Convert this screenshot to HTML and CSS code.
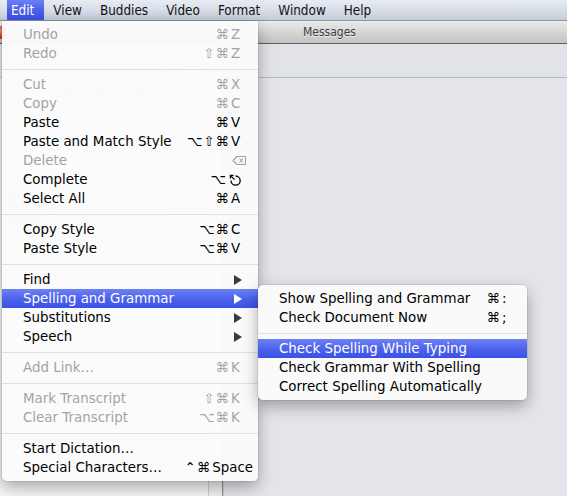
FILE: index.html
```html
<!DOCTYPE html>
<html lang="en">
<head>
<meta charset="utf-8">
<title>Messages — Edit menu</title>
<link rel="stylesheet" href="styles.css">
</head>
<body>
  <header class="menubar">
    <span class="mb-item mb-first active">Edit</span>
    <span class="mb-item">View</span>
    <span class="mb-item">Buddies</span>
    <span class="mb-item">Video</span>
    <span class="mb-item">Format</span>
    <span class="mb-item">Window</span>
    <span class="mb-item">Help</span>
  </header>

  <div class="window">
    <div class="titlebar">
      <div class="lights"><span class="light close"></span></div>
      <span class="title">Messages</span>
      <div></div>
    </div>
    <div class="panes">
      <aside class="sidebar">
        <div class="side-main">
          <div class="side-head">
            <div class="search"><span class="glass"></span></div>
            <span class="compose"></span>
          </div>
          <div class="conv new">New Message</div>
          <div class="conv person">
            <span class="avatar"></span>
            <div class="conv-lines">
              <span class="line l1"></span>
              <span class="line l2"></span>
              <span class="line l3"></span>
            </div>
          </div>
        </div>
        <div class="side-strip"></div>
      </aside>
      <main class="content">
        <div class="content-bar"></div>
      </main>
    </div>
  </div>

  <div class="menu edit-menu">
    <div class="item disabled"><span class="label">Undo</span><span class="sc"><span class="mods">⌘</span><span class="key">Z</span></span></div>
    <div class="item disabled"><span class="label">Redo</span><span class="sc"><span class="mods">⇧⌘</span><span class="key">Z</span></span></div>
    <div class="sep"></div>
    <div class="item disabled"><span class="label">Cut</span><span class="sc"><span class="mods">⌘</span><span class="key">X</span></span></div>
    <div class="item disabled"><span class="label">Copy</span><span class="sc"><span class="mods">⌘</span><span class="key">C</span></span></div>
    <div class="item"><span class="label">Paste</span><span class="sc"><span class="mods">⌘</span><span class="key">V</span></span></div>
    <div class="item"><span class="label">Paste and Match Style</span><span class="sc"><span class="mods">⌥⇧⌘</span><span class="key">V</span></span></div>
    <div class="item disabled"><span class="label">Delete</span><span class="sc"><span class="key wide">
      <svg class="glyph-del" viewBox="0 0 15 11" width="15" height="11"><path d="M5 1.5 H13.5 V9.5 H5 L1 5.5 Z" fill="none" stroke="currentColor" stroke-width="1.1" stroke-linejoin="round"/><path d="M7.5 3.5 L11 7.5 M11 3.5 L7.5 7.5" stroke="currentColor" stroke-width="1.1" fill="none"/></svg>
    </span></span></div>
    <div class="item"><span class="label">Complete</span><span class="sc"><span class="mods">⌥</span><span class="key">
      <svg class="glyph-esc" viewBox="0 0 12 12" width="12" height="12"><path d="M6.6 2 A4.6 4.6 0 1 1 2 6.6" fill="none" stroke="currentColor" stroke-width="1.3"/><path d="M5.6 5.6 L1.6 1.6 M1.4 4.6 V1.4 H4.6" fill="none" stroke="currentColor" stroke-width="1.3"/></svg>
    </span></span></div>
    <div class="item"><span class="label">Select All</span><span class="sc"><span class="mods">⌘</span><span class="key">A</span></span></div>
    <div class="sep"></div>
    <div class="item"><span class="label">Copy Style</span><span class="sc"><span class="mods">⌥⌘</span><span class="key">C</span></span></div>
    <div class="item"><span class="label">Paste Style</span><span class="sc"><span class="mods">⌥⌘</span><span class="key">V</span></span></div>
    <div class="sep"></div>
    <div class="item"><span class="label">Find</span><span class="arrow"></span></div>
    <div class="item hl"><span class="label">Spelling and Grammar</span><span class="arrow"></span></div>
    <div class="item"><span class="label">Substitutions</span><span class="arrow"></span></div>
    <div class="item"><span class="label">Speech</span><span class="arrow"></span></div>
    <div class="sep"></div>
    <div class="item disabled"><span class="label">Add Link…</span><span class="sc"><span class="mods">⌘</span><span class="key">K</span></span></div>
    <div class="sep"></div>
    <div class="item disabled"><span class="label">Mark Transcript</span><span class="sc"><span class="mods">⇧⌘</span><span class="key">K</span></span></div>
    <div class="item disabled"><span class="label">Clear Transcript</span><span class="sc"><span class="mods">⌥⌘</span><span class="key">K</span></span></div>
    <div class="sep"></div>
    <div class="item"><span class="label">Start Dictation…</span></div>
    <div class="item"><span class="label">Special Characters…</span><span class="sc sc-space"><span class="mods">⌃⌘</span><span class="key">Space</span></span></div>
  </div>

  <div class="menu submenu">
    <div class="item"><span class="label">Show Spelling and Grammar</span><span class="sc"><span class="mods">⌘</span><span class="key">:</span></span></div>
    <div class="item"><span class="label">Check Document Now</span><span class="sc"><span class="mods">⌘</span><span class="key">;</span></span></div>
    <div class="sep"></div>
    <div class="item hl"><span class="label">Check Spelling While Typing</span></div>
    <div class="item"><span class="label">Check Grammar With Spelling</span></div>
    <div class="item"><span class="label">Correct Spelling Automatically</span></div>
  </div>
</body>
</html>
```

FILE: styles.css
```css
* { box-sizing: border-box; }

html, body { margin: 0; padding: 0; }

body {
  width: 567px;
  height: 496px;
  overflow: hidden;
  position: relative;
  background: #e3e5eb;
  font-family: "DejaVu Sans", "Noto Sans", sans-serif;
}

/* ---------- menu bar ---------- */
.menubar {
  height: 21px;
  display: flex;
  align-items: stretch;
  padding-left: 7px;
  background: linear-gradient(to bottom, #e8ecf2 0%, #d6dce6 55%, #c4ccd9 100%);
  border-bottom: 1px solid #8e97a5;
  font-family: "DejaVu Sans Condensed", "DejaVu Sans", sans-serif;
  font-stretch: condensed;
  font-size: 13.4px;
  color: #121212;
}

.mb-item {
  display: flex;
  align-items: center;
  padding: 0 9px;
  white-space: nowrap;
}

.mb-item.mb-first { padding-left: 4px; padding-right: 10px; }

.mb-item.active {
  color: #fff;
  background: linear-gradient(to bottom, #6c80f5 0%, #4a60ec 50%, #3a50e6 100%);
}

/* ---------- Messages window ---------- */
.window {
  width: 659px;
  height: 475px;
  display: flex;
  flex-direction: column;
}

.titlebar {
  height: 23px;
  display: grid;
  grid-template-columns: 1fr auto 1fr;
  align-items: center;
  background: linear-gradient(to bottom, #ebebeb 0%, #d6d6d6 50%, #c3c3c3 100%);
  border-bottom: 1px solid #5f5f5f;
}

.lights { display: flex; align-items: center; }

.light {
  width: 13px;
  height: 13px;
  border-radius: 50%;
  margin-left: -6px;
}

.light.close {
  background: radial-gradient(circle at 50% 35%, #ff8a7d 0%, #e0443a 55%, #a82a22 100%);
}

.title {
  font-family: "DejaVu Sans Condensed", "DejaVu Sans", sans-serif;
  font-stretch: condensed;
  font-size: 12px;
  color: #3b3b3b;
  text-shadow: 0 1px 0 rgba(255, 255, 255, 0.6);
}

.panes {
  flex: 1;
  display: grid;
  grid-template-columns: 223px 1fr;
}

.sidebar {
  display: grid;
  grid-template-columns: 1fr 14px;
  background: #f6f6f6;
  border-right: 1px solid #8f9299;
}

.side-main { display: flex; flex-direction: column; }

/* conversation list header and rows (mostly seen through the open menu) */
.side-head {
  height: 34px;
  display: flex;
  align-items: center;
  gap: 14px;
  padding: 0 10px;
  border-bottom: 1px solid #d6d6d6;
  background: #eeeeee;
}

.search {
  width: 160px;
  height: 17px;
  border-radius: 9px;
  border: 1px solid #c4c4c4;
  background: #fff;
  display: flex;
  align-items: center;
  padding-left: 5px;
}

.glass {
  width: 8px;
  height: 8px;
  border: 1.5px solid #aaa;
  border-radius: 50%;
}

.compose {
  width: 14px;
  height: 13px;
  border: 1.5px solid #aaa;
  border-radius: 2px;
}

.conv {
  font-size: 13px;
  color: #b9b9b9;
}

.conv.new {
  height: 26px;
  margin: 1px 6px 0;
  padding-left: 50px;
  display: flex;
  align-items: center;
  border: 1px solid #e2e2e2;
  border-radius: 3px;
  background: #fbfbfb;
}

.conv.person {
  margin-top: 85px;
  display: flex;
  gap: 10px;
  padding: 0 8px;
}

.avatar {
  width: 38px;
  height: 38px;
  border-radius: 4px;
  background: #e4e4e4;
}

.conv-lines {
  flex: 1;
  display: flex;
  flex-direction: column;
  gap: 7px;
  padding-top: 4px;
}

.line {
  display: block;
  height: 6px;
  border-radius: 3px;
  background: #dedede;
}

.line.l1 { width: 130px; }
.line.l2 { width: 110px; background: #e6e6e6; }
.line.l3 { width: 90px; background: #e6e6e6; }

.side-strip {
  background: #f1f1f1;
  border-left: 1px solid #cfcfcf;
}

.content {
  display: flex;
  flex-direction: column;
  border-left: 1px solid #cfd2d8;
  background: #e3e5eb;
}

.content-bar {
  height: 34px;
  background: #e1e3e9;
  border-bottom: 1px solid #b6bac3;
}

/* ---------- menus ---------- */
.menu {
  position: absolute;
  padding: 4px 0;
  background: rgba(251, 251, 251, 0.96);
  box-shadow: 0 6px 16px rgba(0, 0, 0, 0.32), 0 0 0 1px rgba(0, 0, 0, 0.07);
  font-size: 13.4px;
  color: #000;
}

.edit-menu {
  left: 2px;
  top: 21px;
  width: 256px;
  border-radius: 0 0 5px 5px;
}

.submenu {
  left: 258px;
  top: 285px;
  width: 269px;
  border-radius: 5px;
}

.item {
  height: 19px;
  display: flex;
  align-items: center;
  padding: 0 17px 0 21px;
  white-space: nowrap;
  line-height: 19px;
}

.submenu .item { padding-right: 15px; }

.item .label { flex: 1; }

.item.disabled { color: #a3a3a3; }

.item.hl {
  color: #fff;
  background: linear-gradient(to bottom, #6d81f5 0%, #4d63ec 50%, #3b51e6 100%);
}

.sep {
  height: 1px;
  margin: 6px 0 5px;
  background: #e0e0e0;
}

/* shortcut column: modifiers right-aligned, key glyph left-aligned */
.sc {
  display: flex;
  align-items: center;
}

.mods {
  letter-spacing: 1px;
  text-align: right;
}

.key {
  min-width: 10px;
  margin-left: 1px;
  display: flex;
  align-items: center;
}

.key.wide { margin-right: -6px; }

.sc-space { margin-right: -12px; }

.glyph-esc { display: block; margin-left: 1px; }
.glyph-del { display: block; }

.arrow {
  width: 0;
  height: 0;
  margin-right: -1px;
  border-left: 8px solid #3a3a3a;
  border-top: 5px solid transparent;
  border-bottom: 5px solid transparent;
}

.item.hl .arrow { border-left-color: #fff; }
```
